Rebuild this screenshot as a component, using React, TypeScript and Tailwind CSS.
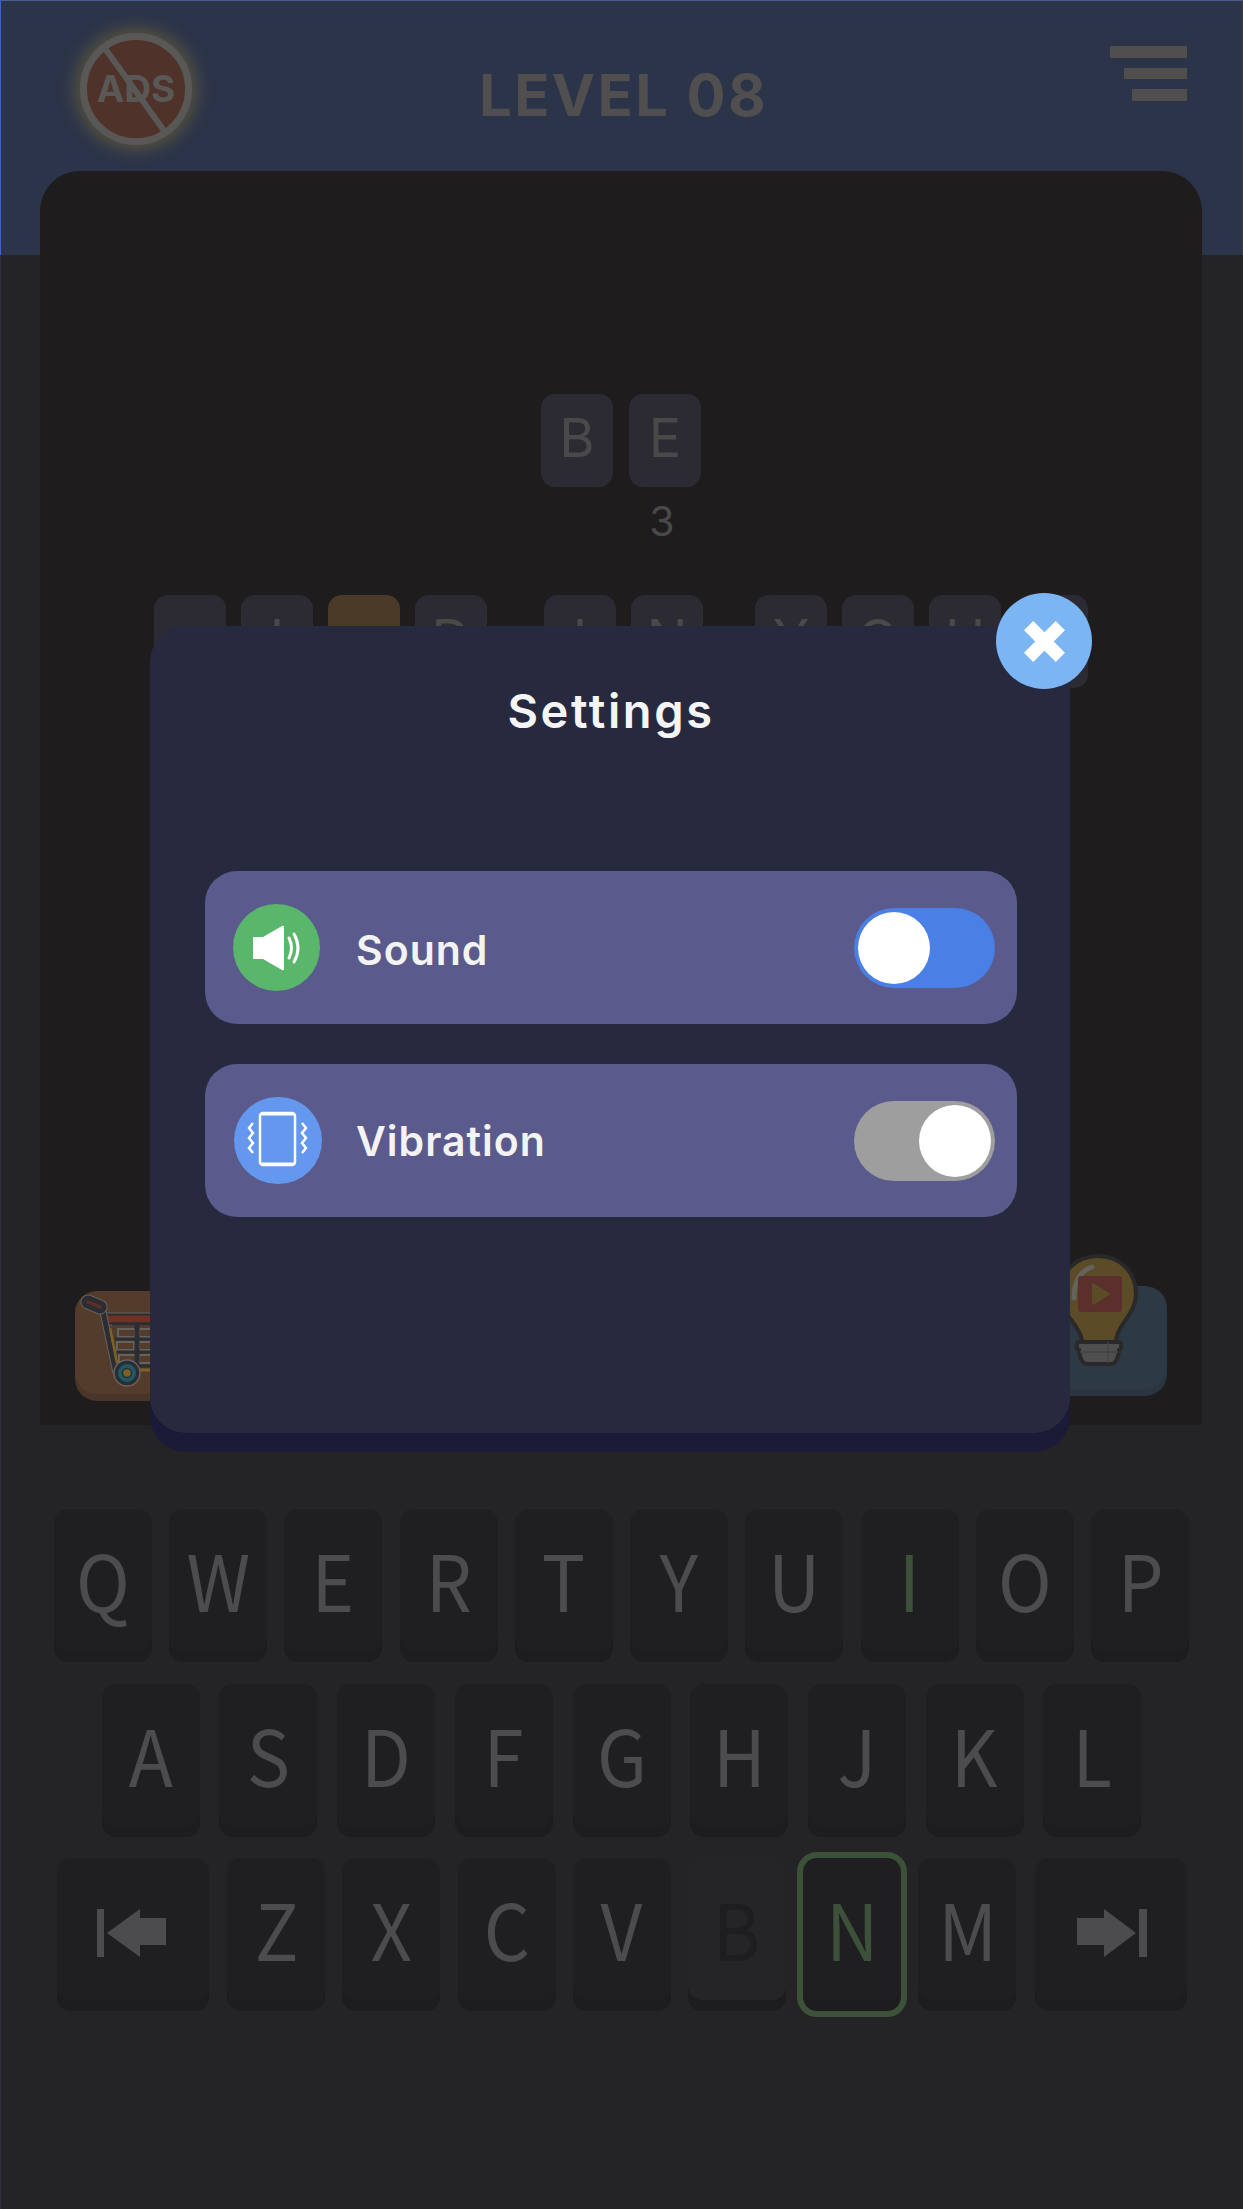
const sans = "font-['Inter',sans-serif]";

const keyRow1 = ["Q", "W", "E", "R", "T", "Y", "U", "I", "O", "P"];
const keyRow2 = ["A", "S", "D", "F", "G", "H", "J", "K", "L"];

function Key({ label, active, hit, used, wide, extra, children }: { label?: string; active?: boolean; hit?: boolean; used?: boolean; wide?: boolean; extra?: string; children?: React.ReactNode }) {
  return (
    <div className={`relative shrink-0 ${wide ? "w-[152px]" : "w-[98px]"} rounded-[14px] flex justify-center pt-[19px] font-['Noto_Sans_CJK_SC',sans-serif] text-[78px] leading-[100px] ${used ? "h-[142px] mb-[11px] bg-[#252427] shadow-[0_11px_0_#1d1c1e] text-[#1e1d1f]" : active || hit ? "h-[143px] mb-[10px] bg-[#1f1e20] shadow-[0_10px_0_#1d1c1e] text-[#3d5039]" : "h-[143px] mb-[10px] bg-[#1f1e20] shadow-[0_10px_0_#1d1c1e] text-[#4c4b4d]"} ${extra ?? ""}`}>
      {label && <span className="inline-block h-[100px] scale-x-[0.93]">{label}</span>}
      {children}
      {active && <div className="absolute -inset-x-[6px] -top-[6px] -bottom-[16px] rounded-[20px] border-[6px] border-[#3d5039]" />}
    </div>
  );
}

function Tile({ letter, brown }: { letter?: string; brown?: boolean }) {
  return (
    <div className={`w-[72px] h-[93px] rounded-[14px] shrink-0 flex justify-center pt-[14px] ${sans} text-[54px] leading-[60px] text-[#4a494a] ${brown ? "bg-[#4c3a28]" : "bg-[#2c2b33]"}`}>
      {letter}
    </div>
  );
}

function AdsBadge() {
  return (
    <div className={`relative w-[112px] h-[112px] rounded-full border-[7px] border-[#5a5856] bg-[#4f3229] shadow-[0_0_16px_5px_#57533f] flex items-center justify-center ${sans} font-bold text-[37px] text-[#5a5856]`}>
      <span>ADS</span>
      <svg className="absolute -inset-[7px]" width="112" height="112" viewBox="0 0 112 112">
        <line x1="24" y1="14" x2="85" y2="99" stroke="#5a5856" strokeWidth="6" />
      </svg>
    </div>
  );
}

function CartIcon() {
  const cells = [
    [38, 34], [59, 34], [37, 47], [59, 47], [39, 60], [59, 60],
  ];
  return (
    <svg width="100" height="95" viewBox="0 0 100 95" className="absolute left-[5px] top-[4px]">
      <path d="M28 24H100" stroke="#66625e" strokeWidth="13" strokeLinecap="round" />
      <path d="M28 24H100" stroke="#2b2d33" strokeWidth="11" strokeLinecap="round" />
      <path d="M29 24H100" stroke="#6d3126" strokeWidth="7" strokeLinecap="round" />
      {cells.map(([x, y]) => (
        <rect key={`${x}-${y}`} x={x} y={y} width="17" height="8" fill="#533c2b" stroke="#66625e" strokeWidth="2" />
      ))}
      <path d="M57 30V76" stroke="#2b2d33" strokeWidth="5" />
      <path d="M32 29H100M35 44H100M37 57H100M40 71H100" stroke="#2b2d33" strokeWidth="3" />
      <path d="M50 75H100" stroke="#7a6324" strokeWidth="3" />
      <path d="M22 12L36 78" stroke="#66625e" strokeWidth="7" />
      <path d="M22 12L36 78" stroke="#2b2d33" strokeWidth="5" />
      <path d="M30 33L37 68" stroke="#7a6324" strokeWidth="2.5" />
      <path d="M8 7L20 12" stroke="#66625e" strokeWidth="15" strokeLinecap="round" />
      <path d="M8 7L20 12" stroke="#2b2d33" strokeWidth="13" strokeLinecap="round" />
      <path d="M8 7L20 12" stroke="#5e2f27" strokeWidth="3.5" strokeLinecap="round" />
      <circle cx="47" cy="78" r="13" fill="#2b2d33" stroke="#66625e" strokeWidth="1.5" />
      <circle cx="47" cy="78" r="9" fill="#1f5a66" />
      <circle cx="47" cy="78" r="4.5" fill="#7a6324" stroke="#2b2d33" strokeWidth="1.5" />
    </svg>
  );
}

function BulbIcon() {
  return (
    <svg width="88" height="118" viewBox="0 0 88 118" className="absolute left-[17px] -top-[34px]">
      <path d="M44 4C22 4 6 20 6 42C6 56 18 68 24 78C27 83 28 86 28 90H62C62 85 64 80 67 75C73 65 82 56 82 42C82 20 66 4 44 4Z" fill="#5b4b27" stroke="#2a2929" strokeWidth="4" />
      <path d="M20 46C20 30 26 19 38 15" fill="none" stroke="#65635c" strokeWidth="5" strokeLinecap="round" />
      <rect x="24" y="24" width="44" height="36" rx="3" fill="#5a2f2c" />
      <path d="M39 32L55 42L39 52Z" fill="#5b4b27" stroke="#5b4b27" strokeWidth="2" strokeLinejoin="round" />
      <path d="M25 90H65C68 90 68 97 65 98C64 107 62 112 57 112H33C28 112 26 107 25 98C22 97 22 90 25 90Z" fill="#4f4f4f" stroke="#2a2929" strokeWidth="4" />
      <path d="M26 100H64" stroke="#454545" strokeWidth="2" />
      <path d="M54 90V111" stroke="#454545" strokeWidth="1.5" />
    </svg>
  );
}

function SoundIcon() {
  return (
    <svg width="87" height="87" viewBox="0 0 87 87" fill="none">
      <path d="M20 34Q20 33 21 33H30L49 22Q51 21 51 23V65Q51 67 49 66L30 55H21Q20 55 20 54Z" fill="#fff" />
      <path d="M56 34Q61 44 56 54" stroke="#fff" strokeWidth="3" strokeLinecap="round" />
      <path d="M61 30Q69 44 61 58" stroke="#fff" strokeWidth="3" strokeLinecap="round" />
    </svg>
  );
}

function VibrationIcon() {
  return (
    <svg width="88" height="87" viewBox="0 0 88 87" fill="none">
      <rect x="26" y="16" width="35" height="52" rx="3" stroke="#fff" strokeWidth="2.5" />
      <path d="M26 17.5H61M26 66.5H61" stroke="#fff" strokeWidth="2" />
      <path d="M19 26L15 31L19 36L15 41L19 46L15 51L19 56" stroke="#fff" strokeWidth="2.5" />
      <path d="M68 26L72 31L68 36L72 41L68 46L72 51L68 56" stroke="#fff" strokeWidth="2.5" />
    </svg>
  );
}

function Toggle({ on }: { on: boolean }) {
  return (
    <div className={`w-[141px] h-[80px] rounded-full flex items-center px-[4px] ${on ? "bg-[#4a7fe6] justify-start" : "bg-[#9e9e9e] justify-end"}`}>
      <div className="w-[72px] h-[72px] rounded-full bg-white" />
    </div>
  );
}

function SettingRow({ label, on, children, textClass }: { label: string; on: boolean; children: React.ReactNode; textClass: string }) {
  return (
    <div className="h-[153px] rounded-[32px] bg-[#5a5a8c] flex items-center">
      {children}
      <span className={`${sans} font-semibold text-[41px] tracking-[1px] text-[#f3f3f3] ${textClass}`}>{label}</span>
      <div className="ml-auto mr-[22px]">
        <Toggle on={on} />
      </div>
    </div>
  );
}

export default function App() {
  return (
    <div className="relative w-[1243px] h-[2209px] overflow-hidden bg-[#242326] shadow-[inset_1px_0_0_#2f2e45]">
      {/* header */}
      <div className="h-[255px] bg-[#2c344a] border-t border-l border-r border-t-[#4a5d8f] border-l-[#3a66c8] border-r-[#3a3a45] flex items-start pl-[79px] pr-[55px] pt-[32px]">
        <AdsBadge />
        <h1 className={`${sans} font-bold text-[58px] tracking-[2.4px] leading-[70px] text-[#504e4f] ml-[287px] mt-[27px]`}>LEVEL 08</h1>
        <div className="ml-auto mt-[13px] flex flex-col items-end gap-[10px]">
          <div className="w-[77px] h-[12px] bg-[#504e4f]" />
          <div className="w-[63px] h-[11px] bg-[#504e4f]" />
          <div className="w-[55px] h-[12px] bg-[#504e4f]" />
        </div>
      </div>

      {/* board */}
      <div className="relative -mt-[84px] ml-[40px] mr-[41px] h-[1254px] rounded-t-[40px] bg-[#1e1c1d] flex flex-col items-center pt-[223px]">
        <div className="flex gap-[16px] h-[201px]">
          <Tile letter="B" />
          <div className="flex flex-col items-center">
            <Tile letter="E" />
            <span className={`${sans} text-[41px] leading-[48px] text-[#4a494a] mt-[10px] -ml-[6px]`}>3</span>
          </div>
        </div>
        <div className="flex gap-[15px]">
          <Tile />
          <Tile letter="I" />
          <Tile brown />
          <Tile letter="D" />
          <div className="w-[27px]" />
          <Tile letter="I" />
          <Tile letter="N" />
          <div className="w-[22px]" />
          <Tile letter="Y" />
          <Tile letter="O" />
          <Tile letter="U" />
          <Tile />
        </div>

        <div className="mt-auto w-full pl-[35px] pr-[35px] flex justify-between items-end">
          <div className="relative w-[130px] h-[103px] mb-[31px] rounded-[22px] bg-[#533c2b] shadow-[0_7px_0_#49352a]">
            <CartIcon />
          </div>
          <div className="relative w-[130px] h-[103px] mb-[36px] rounded-[22px] bg-[#2d3a45] shadow-[0_7px_0_#2b3540]">
            <BulbIcon />
          </div>
        </div>
      </div>

      {/* keyboard */}
      <div className="flex flex-col items-center mt-[84px]">
        <div className="flex gap-[17.3px]">
          {keyRow1.map((k) => (
            <Key key={k} label={k} hit={k === "I"} />
          ))}
        </div>
        <div className="flex gap-[19.7px] mt-[22px]">
          {keyRow2.map((k) => (
            <Key key={k} label={k} />
          ))}
        </div>
        <div className="flex gap-[17.2px] mt-[21px]">
          <Key wide extra="mr-[1.5px]">
            <svg width="70" height="48" viewBox="0 0 70 48" className="absolute left-[40px] top-[51px]">
              <rect x="0" y="0" width="7" height="48" fill="#4c4b4d" />
              <path d="M10 24L43 0V9H69V36H43V48Z" fill="#4c4b4d" />
            </svg>
          </Key>
          <Key label="Z" />
          <Key label="X" />
          <Key label="C" />
          <Key label="V" />
          <Key label="B" used />
          <Key label="N" active />
          <Key label="M" />
          <Key wide extra="ml-[1px]">
            <svg width="70" height="48" viewBox="0 0 70 48" className="absolute left-[42px] top-[51px]">
              <path d="M0 9H27V0L59 24L27 48V36H0Z" fill="#4c4b4d" />
              <rect x="62" y="0" width="8" height="48" fill="#4c4b4d" />
            </svg>
          </Key>
        </div>
      </div>

      {/* settings modal */}
      <div className="absolute left-[150px] top-[626px] w-[920px] h-[807px] rounded-[36px] bg-[#27293e] shadow-[0_19px_0_#1b1b37] pl-[55px] pr-[53px]">
        <h2 className={`${sans} font-semibold text-[47px] tracking-[2.6px] leading-[56px] text-[#f5f5f5] text-center mt-[57px]`}>Settings</h2>
        <div className="mt-[132px] flex flex-col gap-[40px]">
          <SettingRow label="Sound" on textClass="ml-[36px] mt-[6px]">
            <div className="ml-[28px] w-[87px] h-[87px] rounded-full bg-[#59b66b]">
              <SoundIcon />
            </div>
          </SettingRow>
          <SettingRow label="Vibration" on={false} textClass="ml-[34px] mt-[2px]">
            <div className="ml-[29px] w-[88px] h-[87px] rounded-full bg-[#6497ee]">
              <VibrationIcon />
            </div>
          </SettingRow>
        </div>
        <button className="absolute -right-[22px] -top-[33px] w-[96px] h-[96px] rounded-full bg-[#7cb5f3] flex items-center justify-center">
          <svg width="41" height="41" viewBox="0 0 41 41">
            <path d="M4.6 4.6L36.4 36.4M36.4 4.6L4.6 36.4" stroke="#fff" strokeWidth="13" />
          </svg>
        </button>
      </div>
    </div>
  );
}
